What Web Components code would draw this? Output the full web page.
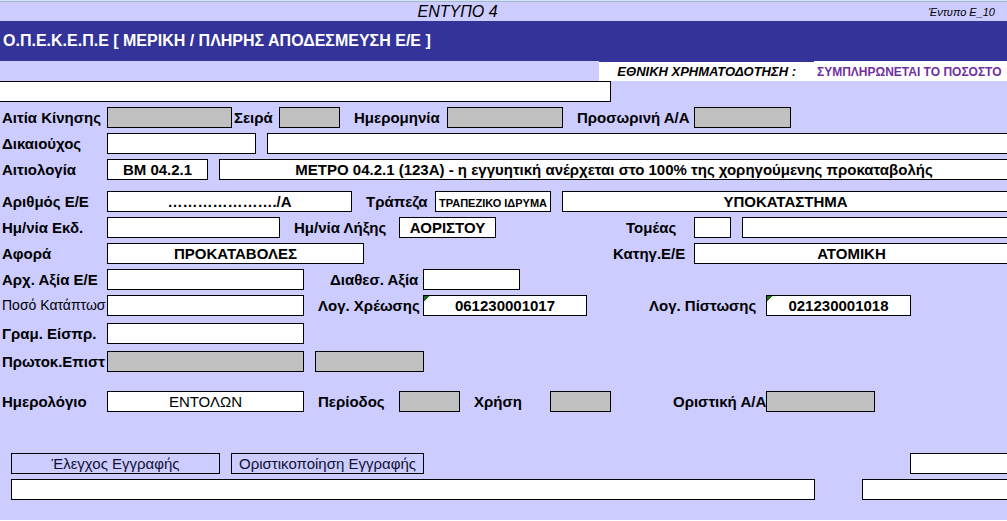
<!DOCTYPE html>
<html lang="el">
<head>
<meta charset="utf-8">
<title>ΕΝΤΥΠΟ 4</title>
<style>
  body {
    margin: 0;
    font-family: "Liberation Sans", Arial, sans-serif;
    background: #fff;
  }
</style>
</head>
<body>
<form-sheet>
  <sheet-header code="Έντυπο Ε_10" heading="Ο.Π.Ε.Κ.Ε.Π.Ε [ ΜΕΡΙΚΗ / ΠΛΗΡΗΣ ΑΠΟΔΕΣΜΕΥΣΗ Ε/Ε ]">ΕΝΤΥΠΟ 4</sheet-header>
  <funding-note label="ΕΘΝΙΚΗ ΧΡΗΜΑΤΟΔΟΤΗΣΗ :">ΣΥΜΠΛΗΡΩΝΕΤΑΙ ΤΟ ΠΟΣΟΣΤΟ</funding-note>

  <form-row>
    <form-field hint="Περιγραφή" size="611" class="flush"></form-field>
  </form-row>
  <form-row>
    <form-field label="Αιτία Κίνησης" lead="107" size="125" locked></form-field>
    <form-field label="Σειρά" lead="47" size="61" locked></form-field>
    <form-field label="Ημερομηνία" gap="12" lead="95" size="116" locked></form-field>
    <form-field label="Προσωρινή Α/Α" gap="12" lead="119" size="97" locked></form-field>
  </form-row>
  <form-row>
    <form-field label="Δικαιούχος" lead="107" size="149"></form-field>
    <form-field hint="Επωνυμία δικαιούχου" gap="11" fill></form-field>
  </form-row>
  <form-row>
    <form-field label="Αιτιολογία" lead="107" size="101" value="ΒΜ 04.2.1"></form-field>
    <form-field hint="Περιγραφή αιτιολογίας" gap="11" fill value="ΜΕΤΡΟ 04.2.1 (123Α) - η εγγυητική ανέρχεται στο 100% της χορηγούμενης προκαταβολής"></form-field>
  </form-row>

  <form-row space="11">
    <form-field label="Αριθμός Ε/Ε" lead="107" size="245" value="…………………./Α"></form-field>
    <form-field label="Τράπεζα" gap="12" lead="71" size="116" value="ΤΡΑΠΕΖΙΚΟ ΙΔΡΥΜΑ" class="small"></form-field>
    <form-field hint="Υποκατάστημα" gap="11" fill value="ΥΠΟΚΑΤΑΣΤΗΜΑ"></form-field>
  </form-row>
  <form-row>
    <form-field label="Ημ/νία Εκδ." lead="107" size="173"></form-field>
    <form-field label="Ημ/νία Λήξης" gap="12" lead="107" size="97" value="ΑΟΡΙΣΤΟΥ"></form-field>
    <form-field label="Τομέας" gap="128" lead="70" size="37"></form-field>
    <form-field hint="Περιγραφή τομέα" gap="11" fill></form-field>
  </form-row>
  <form-row>
    <form-field label="Αφορά" lead="107" size="257" value="ΠΡΟΚΑΤΑΒΟΛΕΣ"></form-field>
    <form-field label="Κατηγ.Ε/Ε" gap="247" lead="83" fill value="ΑΤΟΜΙΚΗ"></form-field>
  </form-row>
  <form-row>
    <form-field label="Αρχ. Αξία Ε/Ε" lead="107" size="197"></form-field>
    <form-field label="Διαθεσ. Αξία" gap="24" lead="95" size="97"></form-field>
  </form-row>
  <form-row>
    <form-field label="Ποσό Κατάπτωσ" lead="107" size="197" class="light"></form-field>
    <form-field label="Λογ. Χρέωσης" gap="12" lead="107" size="164" value="061230001017" flagged></form-field>
    <form-field label="Λογ. Πίστωσης" gap="60" lead="119" size="145" value="021230001018" flagged></form-field>
  </form-row>
  <form-row space="7">
    <form-field label="Γραμ. Είσπρ." lead="107" size="197"></form-field>
  </form-row>
  <form-row space="7">
    <form-field label="Πρωτοκ.Επιστ" lead="107" size="197" locked></form-field>
    <form-field hint="Ημερομηνία πρωτοκόλλου" gap="11" size="109" locked></form-field>
  </form-row>

  <form-row space="19">
    <form-field label="Ημερολόγιο" lead="107" size="197" value="ΕΝΤΟΛΩΝ" class="plain"></form-field>
    <form-field label="Περίοδος" gap="12" lead="83" size="61" locked></form-field>
    <form-field label="Χρήση" gap="12" lead="78" size="61" locked></form-field>
    <form-field label="Οριστική Α/Α" gap="60" lead="95" size="109" locked></form-field>
  </form-row>

  <form-row space="41">
    <form-action gap="11" size="209">Έλεγχος Εγγραφής</form-action>
    <form-action gap="11" size="193">Οριστικοποίηση Εγγραφής</form-action>
    <form-field hint="Κωδικός ελέγχου" gap="486" fill></form-field>
  </form-row>
  <form-row>
    <form-field hint="Μήνυμα ελέγχου" gap="11" size="804"></form-field>
    <form-field hint="Κατάσταση εγγραφής" gap="47" fill></form-field>
  </form-row>
</form-sheet>

<script>
class FormSheet extends HTMLElement {
  constructor() {
    super();
    this.attachShadow({ mode: 'open' }).innerHTML = `
      <style>
        :host {
          display: block;
          overflow: hidden;
          padding-bottom: 20px;
          background: #ccccff;
          color: #000;
        }
      </style>
      <slot></slot>
    `;
  }
}

class SheetHeader extends HTMLElement {
  constructor() {
    super();
    this.attachShadow({ mode: 'open' }).innerHTML = `
      <style>
        :host {
          display: block;
        }
        .top {
          display: grid;
          grid-template-columns: 1fr auto 1fr;
          align-items: center;
          box-sizing: border-box;
          height: 21px;
          padding: 1px 12px 0 0;
          border-top: 1px solid #d3e3f3;
          background: linear-gradient(#a3b9cf 1px, transparent 1px);
          font-style: italic;
        }
        .name {
          grid-column: 2;
          font-size: 16px;
          line-height: 19px;
          margin-right: 80px;
        }
        .code {
          justify-self: end;
          font-size: 11px;
        }
        h1 {
          margin: 0;
          padding: 0 3px;
          background: #333399;
          color: #fff;
          font-size: 16px;
          line-height: 40px;
        }
      </style>
      <div class="top">
        <span class="name"><slot></slot></span>
        <span class="code"></span>
      </div>
      <h1></h1>
    `;
  }

  connectedCallback() {
    this.shadowRoot.querySelector('.code').textContent = this.getAttribute('code');
    this.shadowRoot.querySelector('h1').textContent = this.getAttribute('heading');
  }
}

class FundingNote extends HTMLElement {
  constructor() {
    super();
    this.attachShadow({ mode: 'open' }).innerHTML = `
      <style>
        :host {
          display: flex;
          justify-content: flex-end;
          height: 20px;
          font-weight: bold;
          line-height: 20px;
        }
        .label {
          box-sizing: border-box;
          width: 215px;
          padding-right: 18px;
          border-top: 1px solid #333399;
          background: #fff;
          font-size: 13px;
          font-style: italic;
          text-align: right;
        }
        .note {
          box-sizing: border-box;
          width: 193px;
          padding-left: 3px;
          background: #fff;
          color: #7030a0;
          font-size: 12px;
          line-height: 22px;
          white-space: nowrap;
        }
      </style>
      <span class="label"></span>
      <span class="note"><slot></slot></span>
    `;
  }

  connectedCallback() {
    this.shadowRoot.querySelector('.label').textContent = this.getAttribute('label');
  }
}

class FormRow extends HTMLElement {
  constructor() {
    super();
    this.attachShadow({ mode: 'open' }).innerHTML = `
      <style>
        :host {
          display: flex;
          height: 21px;
          margin-top: var(--space, 5px);
        }
        :host(:first-of-type) {
          margin-top: 0;
        }
      </style>
      <slot></slot>
    `;
  }

  connectedCallback() {
    if (this.hasAttribute('space')) {
      this.style.setProperty('--space', `${this.getAttribute('space')}px`);
    }
  }
}

// gap: space before the label, lead: label width, size: box width
function applyWidths(el) {
  for (const name of ['gap', 'lead', 'size']) {
    el.style.setProperty(`--${name}`, `${el.getAttribute(name) || 0}px`);
  }
}

class FormField extends HTMLElement {
  constructor() {
    super();
    this.attachShadow({ mode: 'open' }).innerHTML = `
      <style>
        :host {
          display: flex;
          flex: none;
          margin-left: var(--gap);
          font-size: 15px;
          font-weight: bold;
        }
        label {
          box-sizing: border-box;
          width: var(--lead);
          padding-left: 2px;
          overflow: hidden;
          line-height: 21px;
          white-space: nowrap;
        }
        input {
          box-sizing: border-box;
          width: var(--size);
          height: 21px;
          margin: 0;
          padding: 0 2px;
          border: 1px solid #000;
          border-radius: 0;
          background: #fff;
          color: inherit;
          font: inherit;
          text-align: center;
        }
        /* runs past the right edge of the sheet */
        :host([fill]) {
          flex: 1;
          margin-right: -2px;
        }
        :host([fill]) input {
          flex: 1;
          min-width: 0;
        }
        :host([locked]) input {
          background: #c0c0c0;
        }
        :host([flagged]) input {
          background: linear-gradient(135deg, #1b6b1b 4px, #fff 4px);
        }
        :host(.flush) input {
          border-left: 0;
        }
        :host(.small) input {
          padding-top: 2px;
          font-size: 11px;
        }
        :host(.plain) input {
          font-weight: normal;
        }
        :host(.light) label {
          font-size: 14px;
          font-weight: normal;
        }
      </style>
      <label for="box"></label>
      <input id="box" type="text">
    `;
  }

  connectedCallback() {
    const label = this.shadowRoot.querySelector('label');
    const input = this.shadowRoot.querySelector('input');
    applyWidths(this);
    if (this.hasAttribute('label')) {
      label.textContent = this.getAttribute('label');
    } else {
      label.remove();
      input.setAttribute('aria-label', this.getAttribute('hint'));
    }
    input.value = this.getAttribute('value') || '';
    input.readOnly = this.hasAttribute('locked');
  }
}

class FormAction extends HTMLElement {
  constructor() {
    super();
    this.attachShadow({ mode: 'open' }).innerHTML = `
      <style>
        :host {
          display: block;
          flex: none;
          margin-left: var(--gap);
        }
        button {
          box-sizing: border-box;
          width: var(--size);
          height: 21px;
          padding: 0;
          border: 1px solid #000;
          background: transparent;
          color: #111133;
          font-family: inherit;
          font-size: 15px;
          line-height: 19px;
          cursor: pointer;
        }
      </style>
      <button type="button"><slot></slot></button>
    `;
  }

  connectedCallback() {
    applyWidths(this);
  }
}

customElements.define('form-sheet', FormSheet);
customElements.define('sheet-header', SheetHeader);
customElements.define('funding-note', FundingNote);
customElements.define('form-row', FormRow);
customElements.define('form-field', FormField);
customElements.define('form-action', FormAction);
</script>
</body>
</html>
